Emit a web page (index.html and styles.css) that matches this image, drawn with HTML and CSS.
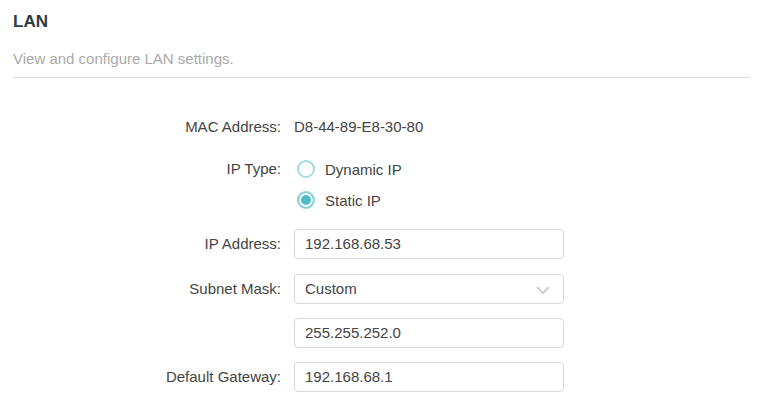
FILE: index.html
```html
<!DOCTYPE html>
<html lang="en">
<head>
    <meta charset="UTF-8">
    <meta name="viewport" content="width=device-width, initial-scale=1.0">
    <title>LAN</title>
    <link rel="stylesheet" href="styles.css">
</head>
<body>
    <div class="page">
        <div class="header">
            <h1>LAN</h1>
            <p class="subtitle">View and configure LAN settings.</p>
        </div>

        <div class="form">
            <div class="row">
                <div class="label">MAC Address:</div>
                <div class="value">D8-44-89-E8-30-80</div>
            </div>

            <div class="row row-radio">
                <div class="label">IP Type:</div>
                <div class="radio-group">
                    <label class="radio">
                        <span class="radio-dot"></span>
                        Dynamic IP
                    </label>
                    <label class="radio checked">
                        <span class="radio-dot"></span>
                        Static IP
                    </label>
                </div>
            </div>

            <div class="row">
                <div class="label">IP Address:</div>
                <div class="input">192.168.68.53</div>
            </div>

            <div class="row row-subnet">
                <div class="label">Subnet Mask:</div>
                <div class="input select">
                    Custom
                    <svg class="chevron" width="14" height="8" viewBox="0 0 14 8">
                        <polyline points="1,1 7,7 13,1" fill="none" stroke="#c6c6c6" stroke-width="1.6"/>
                    </svg>
                </div>
            </div>

            <div class="row">
                <div class="label"></div>
                <div class="input">255.255.252.0</div>
            </div>

            <div class="row">
                <div class="label">Default Gateway:</div>
                <div class="input">192.168.68.1</div>
            </div>
        </div>
    </div>
</body>
</html>
```

FILE: styles.css
```css
* {
    margin: 0;
    padding: 0;
    box-sizing: border-box;
}

body {
    background-color: #fff;
    color: #333;
    font-family: 'Liberation Sans', Arial, sans-serif;
    font-size: 15px;
}

.page {
    padding: 0 11px 0 13px;
}

.header {
    padding-top: 12px;
    border-bottom: 1px solid #dcdcdc;
}

h1 {
    font-size: 17px;
    line-height: 20px;
    font-weight: bold;
    color: #2d3a44;
}

.subtitle {
    margin-top: 17px;
    padding-bottom: 8px;
    line-height: 20px;
    color: #a9a9a9;
}

.form {
    display: flex;
    flex-direction: column;
    gap: 14px;
    padding-top: 34px;
}

.row {
    display: flex;
    align-items: flex-start;
    gap: 13px;
}

.row-radio {
    margin-top: -2px;
}

.row-subnet {
    margin-top: 1px;
}

.label {
    width: 268px;
    height: 30px;
    line-height: 30px;
    text-align: right;
    color: #444;
}

.value {
    line-height: 30px;
    color: #444;
}

.radio-group {
    display: flex;
    flex-direction: column;
    gap: 1px;
}

.radio {
    display: flex;
    align-items: center;
    gap: 10px;
    height: 30px;
    padding-left: 3px;
    color: #444;
}

.radio-dot {
    width: 18px;
    height: 18px;
    border: 2px solid #9fdbe0;
    border-radius: 50%;
    background-color: #fff;
}

.radio.checked .radio-dot {
    border-color: #8fd3d9;
    box-shadow: inset 0 0 0 2px #fff;
    background-color: #4dbcc7;
}

.input {
    position: relative;
    width: 270px;
    height: 30px;
    line-height: 28px;
    padding-left: 10px;
    border: 1px solid #d9d9d9;
    border-radius: 4px;
    color: #444;
}

.chevron {
    position: absolute;
    right: 13px;
    top: 11px;
}
```
